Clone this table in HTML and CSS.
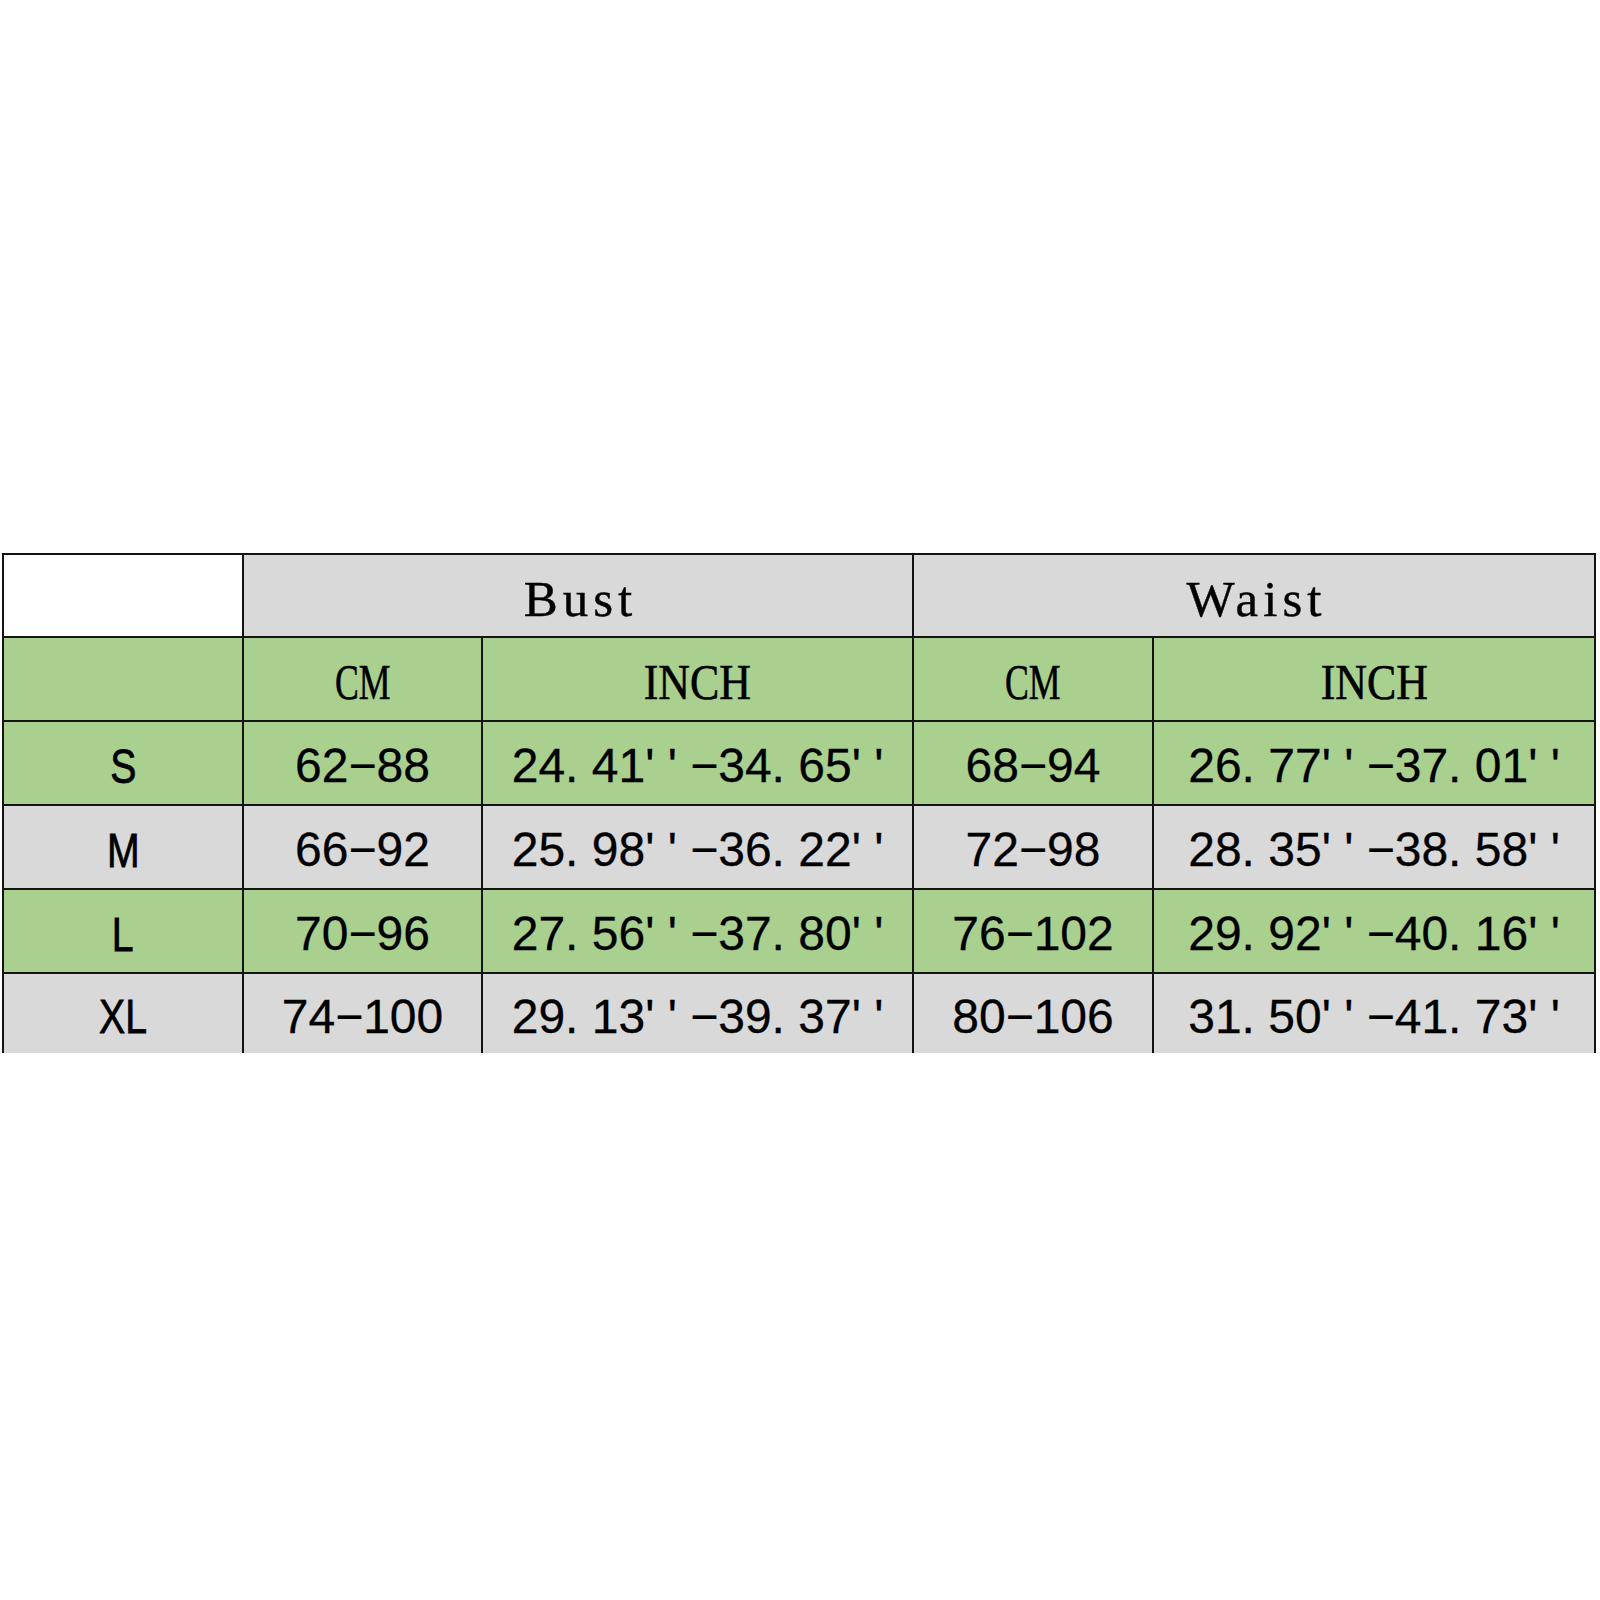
FILE: index.html
```html
<!DOCTYPE html>
<html lang="en">
<head>
<meta charset="utf-8">
<title>Size chart</title>
<link rel="stylesheet" href="styles.css">
</head>
<body>
<div class="chart">
  <div class="cell blank"></div>
  <div class="cell gray span2 hd">Bust</div>
  <div class="cell gray span2 hd">Waist</div>

  <div class="cell green"></div>
  <div class="cell green unit"><span class="cm">CM</span></div>
  <div class="cell green unit"><span class="inch">INCH</span></div>
  <div class="cell green unit"><span class="cm">CM</span></div>
  <div class="cell green unit"><span class="inch">INCH</span></div>

  <div class="cell green lbl"><span>S</span></div>
  <div class="cell green num">62−88</div>
  <div class="cell green num">24. 41<span class="q">' '</span> −34. 65<span class="q">' '</span></div>
  <div class="cell green num">68−94</div>
  <div class="cell green num">26. 77<span class="q">' '</span> −37. 01<span class="q">' '</span></div>

  <div class="cell gray lbl"><span>M</span></div>
  <div class="cell gray num">66−92</div>
  <div class="cell gray num">25. 98<span class="q">' '</span> −36. 22<span class="q">' '</span></div>
  <div class="cell gray num">72−98</div>
  <div class="cell gray num">28. 35<span class="q">' '</span> −38. 58<span class="q">' '</span></div>

  <div class="cell green lbl"><span>L</span></div>
  <div class="cell green num">70−96</div>
  <div class="cell green num">27. 56<span class="q">' '</span> −37. 80<span class="q">' '</span></div>
  <div class="cell green num">76−102</div>
  <div class="cell green num">29. 92<span class="q">' '</span> −40. 16<span class="q">' '</span></div>

  <div class="cell gray lbl"><span>XL</span></div>
  <div class="cell gray num">74−100</div>
  <div class="cell gray num">29. 13<span class="q">' '</span> −39. 37<span class="q">' '</span></div>
  <div class="cell gray num">80−106</div>
  <div class="cell gray num">31. 50<span class="q">' '</span> −41. 73<span class="q">' '</span></div>
</div>
</body>
</html>
```

FILE: styles.css
```css
html, body {
  margin: 0;
  padding: 0;
  background: #ffffff;
}

.chart {
  margin: 553px 0 0 2px;
  width: 1594px;
  box-sizing: border-box;
  padding: 2px 2px 0 2px;
  background: #141414;
  display: grid;
  grid-template-columns: 238px 237px 429px 238px 440px;
  grid-template-rows: 81px 82px 82px 82px 82px 79px;
  gap: 2px;
}

.cell {
  display: flex;
  align-items: center;
  justify-content: center;
  color: #000;
  white-space: pre;
  box-sizing: border-box;
}

.blank { background: #ffffff; }
.gray { background: #d9d9d9; }
.green { background: #a9d08e; }

.span2 { grid-column: span 2; }

.hd {
  font-family: "Liberation Serif", serif;
  font-size: 51px;
  letter-spacing: 5px;
  text-indent: 5px;
  padding-top: 6px;
  -webkit-text-stroke: 0.4px #000;
}

.unit {
  font-family: "Liberation Serif", serif;
  font-size: 51px;
  padding-top: 6px;
  -webkit-text-stroke: 0.6px #000;
}
.unit span { display: inline-block; }
.cm { transform: scaleX(0.7); }
.inch { transform: scaleX(0.86); }

.lbl {
  font-family: "Liberation Sans", sans-serif;
  font-size: 49px;
  padding-top: 5px;
  -webkit-text-stroke: 0.8px #000;
}
.lbl span { display: inline-block; transform: scaleX(0.8); }

.num {
  font-family: "Liberation Sans", sans-serif;
  font-size: 48px;
  padding-top: 5px;
  -webkit-text-stroke: 0.3px #000;
}

.q {
  white-space: pre;
}
```
